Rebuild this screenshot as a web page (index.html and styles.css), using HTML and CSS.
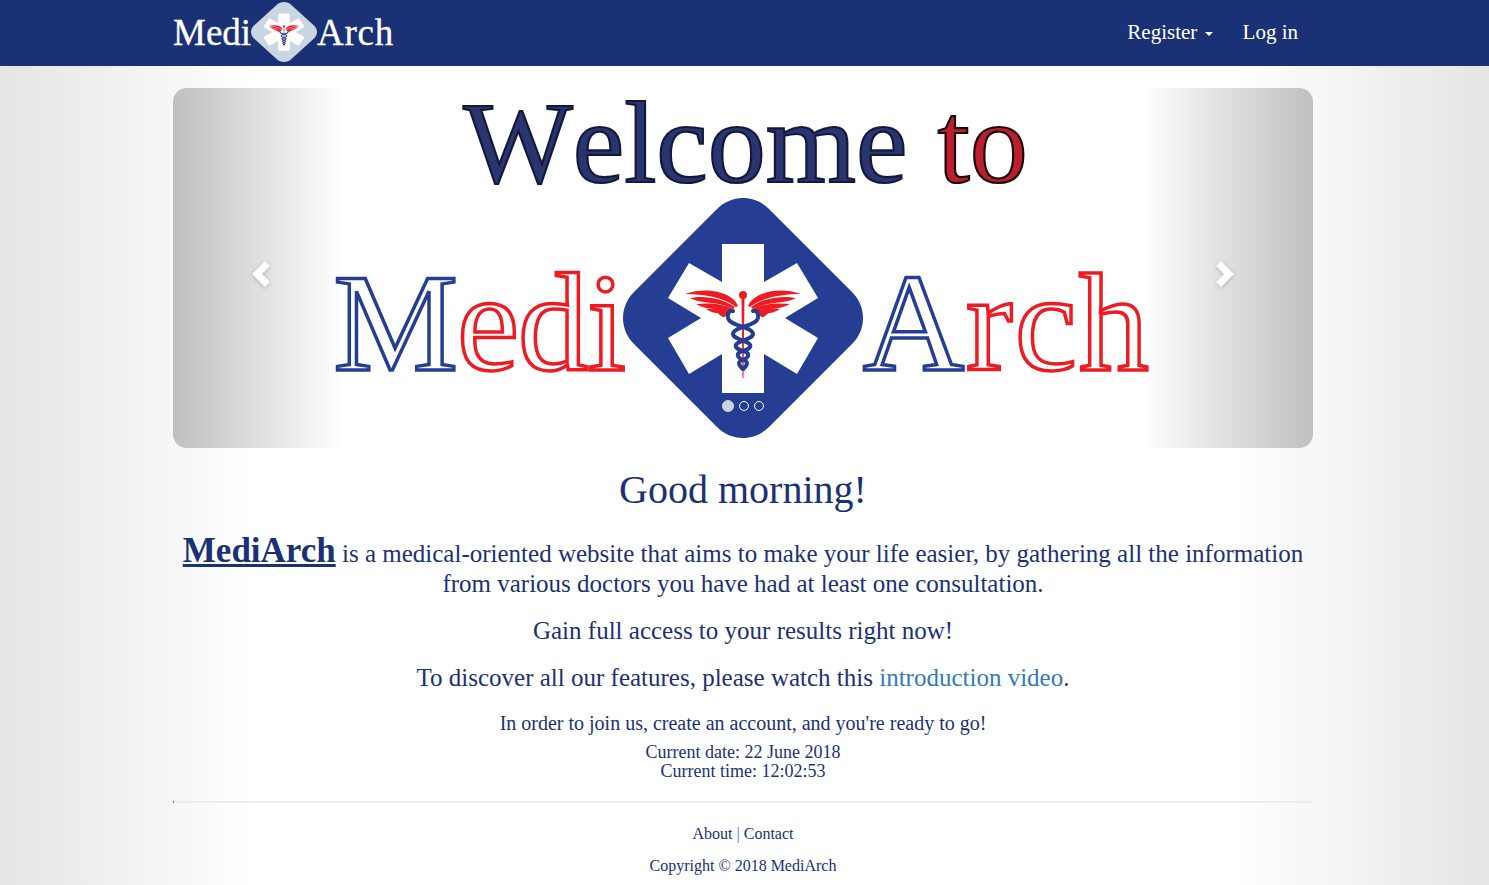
FILE: index.html
```html
<!DOCTYPE html>
<html lang="en">
<head>
<meta charset="utf-8">
<title>MediArch</title>
<link rel="stylesheet" href="styles.css">
</head>
<body>
<svg class="defs" width="0" height="0" aria-hidden="true">
  <defs>
    <g id="wing">
      <path d="M125 108C130 95 155 88 178 96C160 96 140 99 127 109Z"/>
      <path d="M128 109C140 100 160 97 173 100C163 106 145 103 130 111Z"/>
      <path d="M130 111C142 105 155 105 167 106C155 113 142 110 132 113Z"/>
      <path d="M132 113C140 110 148 111 157 111C148 117 140 115 134 116Z"/>
      <path d="M134 116C138 114 142 114 146 114C142 119 138 121 137 117Z"/>
    </g>
    <g id="snake">
      <path d="M110 113C106 112 103 117 106 122C109 128 130 129 130 136C130 142 110 143 113 149C115 153 127 153 125 158C124 162 116 162 116 165C116 168 119 170 120 171"/>
    </g>
    <symbol id="emblem" viewBox="0 0 240 240" preserveAspectRatio="none">
      <path class="diamond" d="M120 0C130 0 139 4 146 11L229 94C236 101 240 110 240 120C240 130 236 139 229 146L146 229C139 236 130 240 120 240C110 240 101 236 94 229L11 146C4 139 0 130 0 120C0 110 4 101 11 94L94 11C101 4 110 0 120 0Z"/>
      <path fill="#fff" d="M99 46H141V84L174 65L195 100L162 120L195 140L174 176L141 156V195H99V156L66 176L45 140L78 120L45 100L66 65L99 84Z"/>
      <g fill="#ed1c24">
        <use href="#wing"/>
        <use href="#wing" transform="translate(240 0) scale(-1 1)"/>
        <circle cx="120" cy="97" r="4"/>
        <path d="M118.5 100H121.5L120.5 180H119.5Z"/>
      </g>
      <g fill="none" stroke="#253d92" stroke-width="4" stroke-linecap="round">
        <use href="#snake"/>
        <use href="#snake" transform="translate(240 0) scale(-1 1)"/>
      </g>
    </symbol>
  </defs>
</svg>

<nav class="navbar">
  <div class="nav-inner">
    <a class="brand" href="#">
      <span>Medi</span>
      <svg class="brand-mark" aria-hidden="true"><use href="#emblem"/></svg>
      <span class="brand-arch">Arch</span>
    </a>
    <ul class="nav-links">
      <li><a href="#">Register <span class="caret"></span></a></li>
      <li><a href="#">Log in</a></li>
    </ul>
  </div>
</nav>

<main class="container">
  <section class="carousel">
    <div class="slide">
      <div class="welcome"><span class="navy">Welcome</span> <span class="crimson">to</span></div>
      <div class="logo-row">
        <div class="outline outline-medi"><span class="o-blue">M</span><span class="o-red">edi</span></div>
        <svg class="logo-mark" aria-hidden="true"><use href="#emblem"/></svg>
        <div class="outline outline-arch"><span class="o-blue">A</span><span class="o-red">rch</span></div>
      </div>
    </div>
    <a class="control control-left" href="#" aria-label="Previous">
      <svg class="chev" viewBox="0 0 20 28" aria-hidden="true"><path d="M15 1L20 6L12 14L20 22L15 27L2 14Z"/></svg>
    </a>
    <a class="control control-right" href="#" aria-label="Next">
      <svg class="chev" viewBox="0 0 20 28" aria-hidden="true"><path d="M5 1L0 6L8 14L0 22L5 27L18 14Z"/></svg>
    </a>
    <ol class="indicators">
      <li class="active"></li>
      <li></li>
      <li></li>
    </ol>
  </section>

  <section class="intro">
    <h2>Good morning!</h2>
    <p class="lead lead-first"><a class="name" href="#">MediArch</a> is a medical-oriented website that aims to make your life easier, by gathering all the information from various doctors you have had at least one consultation.</p>
    <p class="lead">Gain full access to your results right now!</p>
    <p class="lead">To discover all our features, please watch this <a class="video" href="#">introduction video</a>.</p>
    <p class="join">In order to join us, create an account, and you're ready to go!</p>
    <p class="clock">Current date: 22 June 2018<br>Current time: 12:02:53</p>
  </section>

  <hr class="rule">

  <footer class="footer">
    <p><a href="#">About</a> <span class="sep">|</span> <a href="#">Contact</a></p>
    <p>Copyright © 2018 MediArch</p>
  </footer>
</main>
</body>
</html>
```

FILE: styles.css
```css
* { box-sizing: border-box; }
html, body { height: 100%; }
body {
  margin: 0;
  height: 885px;
  overflow: hidden;
  font-family: "Liberation Serif", "Times New Roman", serif;
  color: #1b3175;
  background: linear-gradient(to right, #e5e5e5 0, #fff 255px, #fff 1234px, #e5e5e5 100%);
}
a { text-decoration: none; color: inherit; }
.defs { position: absolute; }
.diamond { fill: var(--diamond, #253d92); }
.navbar { height: 66px; background: #1b3175; }
.nav-inner {
  width: 1140px;
  margin-left: 173px;
  height: 66px;
  display: flex;
  justify-content: space-between;
  align-items: center;
}
.brand {
  display: flex;
  align-items: center;
  color: #fff;
  font-size: 37px;
  height: 66px;
  padding-bottom: 2px;
  -webkit-text-stroke: .3px #fff;
}
.brand-mark { --diamond: #c9d6e2; width: 66px; height: 60px; flex: none; }
.brand-arch { letter-spacing: .7px; }
.nav-links {
  list-style: none;
  margin: 0;
  padding: 0 15px 2px 0;
  display: flex;
  gap: 30px;
  color: #fff;
  font-size: 21px;
}
.caret {
  display: inline-block;
  width: 0;
  height: 0;
  margin-left: 2px;
  vertical-align: middle;
  border-top: 4px solid #fff;
  border-left: 4px solid transparent;
  border-right: 4px solid transparent;
}
.container { width: 1140px; margin-left: 173px; }
.carousel {
  position: relative;
  height: 360px;
  margin-top: 22px;
  border-radius: 14px;
  background: #fff;
}
.slide {
  height: 360px;
  display: flex;
  flex-direction: column;
  align-items: center;
}
.welcome {
  font-size: 116px;
  line-height: 110px;
  height: 110px;
  padding-left: 5px;
  font-kerning: none;
  word-spacing: 1px;
  -webkit-text-stroke: 2.2px #14183a;
  white-space: nowrap;
}
.navy { color: #28356f; }
.crimson { color: #be1e2d; -webkit-text-stroke-color: #1a0a0a; }
.logo-row {
  display: grid;
  grid-template-columns: 1fr 240px 1fr;
  align-items: center;
  width: 100%;
  height: 240px;
}
.logo-mark { width: 240px; height: 240px; display: block; }
.outline {
  font-size: 140px;
  line-height: 140px;
  color: #fff;
  white-space: nowrap;
  margin-top: 9px;
  font-kerning: none;
}
.outline-medi { text-align: right; letter-spacing: -1px; margin-right: -2px; }
.outline-arch { text-align: left; letter-spacing: 2px; }
.o-blue { -webkit-text-stroke: 3.5px #253d92; }
.o-red { -webkit-text-stroke: 3.5px #ed1c24; }
.control {
  position: absolute;
  top: 0;
  bottom: 0;
  width: 171px;
  display: flex;
  align-items: flex-start;
  justify-content: center;
  padding-top: 172px;
}
.control-left {
  left: 0;
  padding-left: 3px;
  border-radius: 14px 0 0 14px;
  background: linear-gradient(to right, rgba(0,0,0,.25), rgba(0,0,0,0));
}
.control-right {
  right: 0;
  padding-right: 4px;
  border-radius: 0 14px 14px 0;
  background: linear-gradient(to left, rgba(0,0,0,.25), rgba(0,0,0,0));
}
.chev { width: 20px; height: 28px; fill: #fff; filter: drop-shadow(0 1px 2px rgba(0,0,0,.2)); }
.indicators {
  position: absolute;
  left: 0;
  right: 0;
  bottom: 36px;
  display: flex;
  justify-content: center;
  align-items: center;
  gap: 5px;
  list-style: none;
  margin: 0;
  padding: 0;
}
.indicators li {
  width: 10px;
  height: 10px;
  border: 1px solid #fff;
  border-radius: 50%;
}
.indicators .active { width: 12px; height: 12px; background: #c9d6e2; border-color: #c9d6e2; }
.intro { text-align: center; }
.intro h2 { font-size: 40px; font-weight: 400; line-height: 44px; margin: 20px 0 0; }
.lead { font-size: 25px; line-height: 30px; margin: 17px 0 0; }
.lead-first { margin-top: 24px; }
.name { font-size: 35px; font-weight: 700; text-decoration: underline; }
.video { color: #337ab7; }
.join { font-size: 20px; line-height: 24px; margin: 18px 0 0; }
.clock { font-size: 18px; line-height: 19px; margin: 8px 0 0; }
.rule { position: relative; border: 0; border-top: 2px solid #eee; margin: 20px 0 0; overflow: visible; }
.rule::before {
  content: "";
  position: absolute;
  left: 0;
  top: -2px;
  width: 1px;
  height: 2px;
  background: #777;
}
.footer { text-align: center; font-size: 16px; }
.footer p { margin: 0; line-height: 20px; }
.footer p:first-child { margin-top: 21px; }
.footer p + p { margin-top: 12px; }
.sep { color: #337ab7; }
```
